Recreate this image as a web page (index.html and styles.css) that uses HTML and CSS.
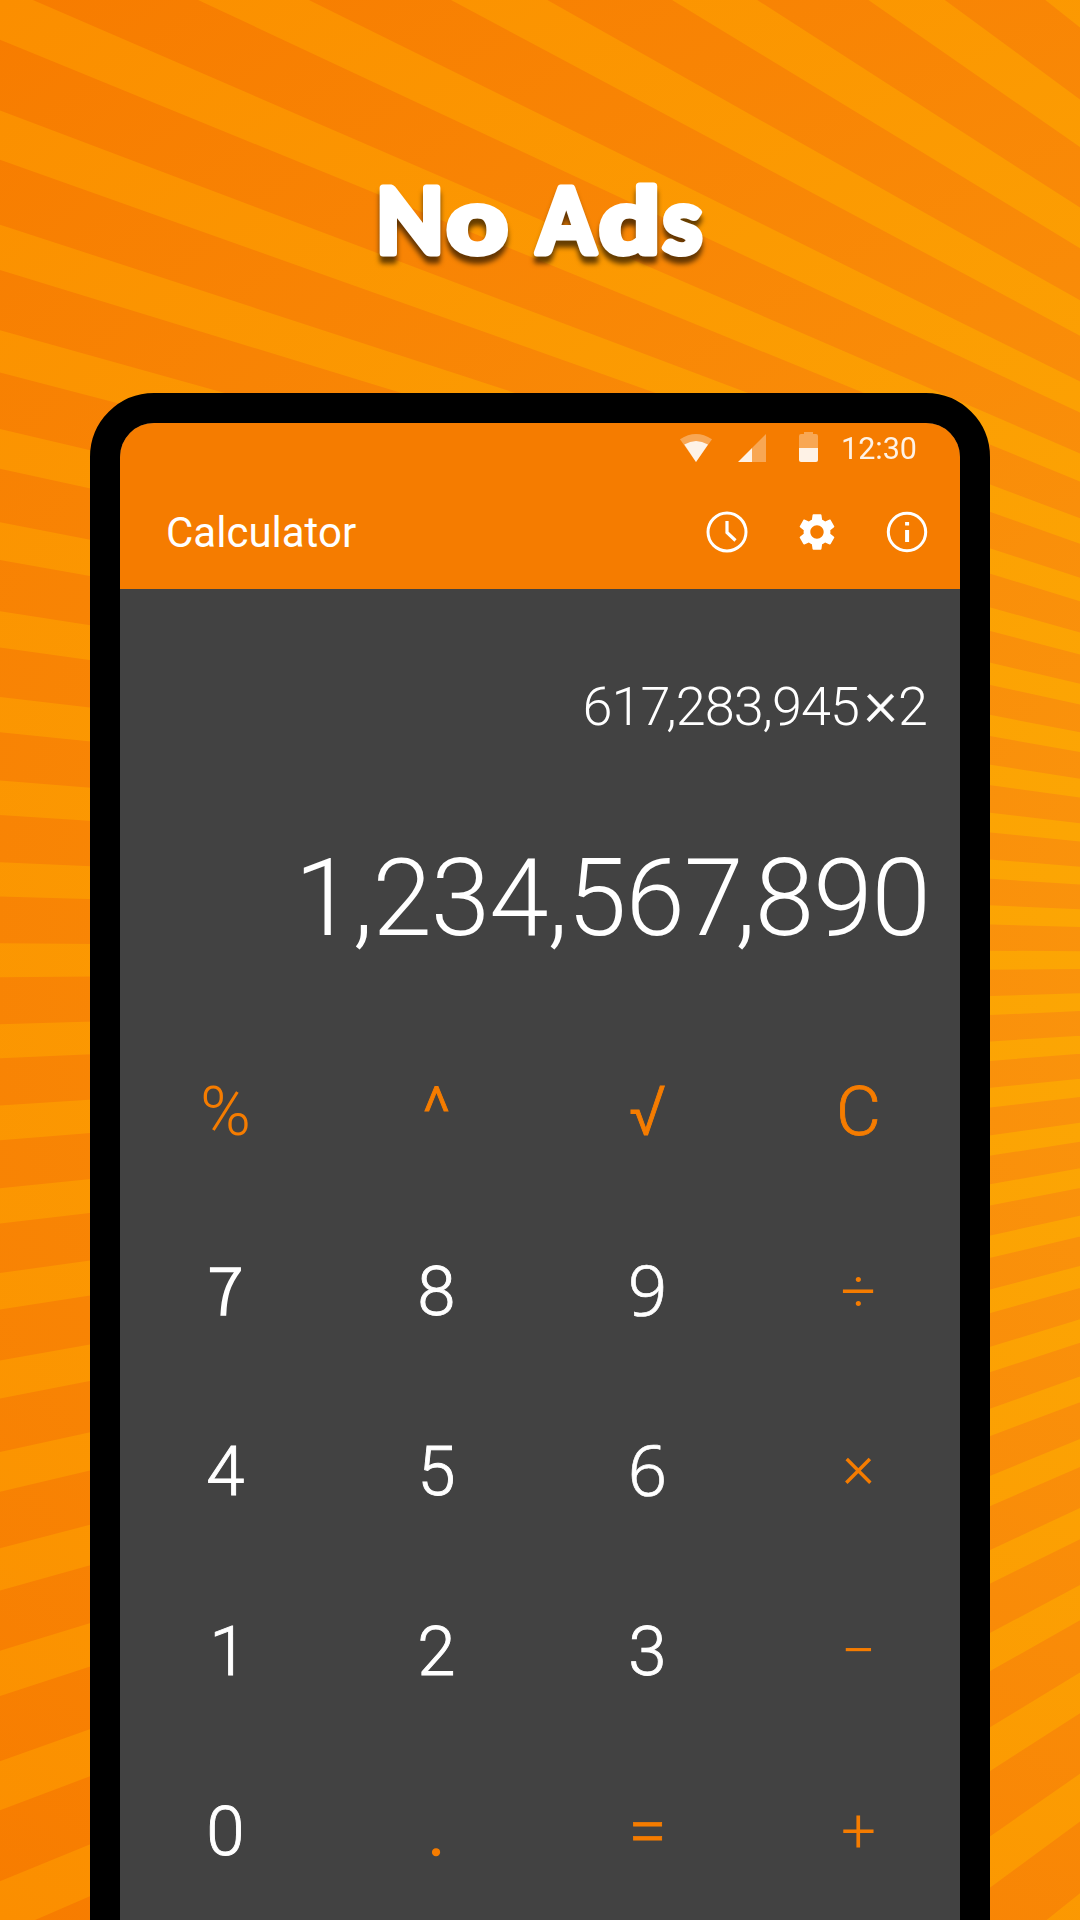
FILE: index.html
```
<!DOCTYPE html>
<html lang="en">
<head>
<meta charset="utf-8">
<title>Calculator</title>
<link rel="stylesheet" href="styles.css">
</head>
<body>
<main class="poster">
  <svg class="rays" viewBox="0 0 1080 1920" aria-hidden="true">
    <defs>
      <radialGradient id="base" gradientUnits="userSpaceOnUse" cx="0" cy="0" r="1564">
        <stop offset=".4" stop-color="#fa930c"/><stop offset="1" stop-color="#f77c00"/>
      </radialGradient>
      <radialGradient id="ray" gradientUnits="userSpaceOnUse" cx="0" cy="0" r="1564">
        <stop offset=".4" stop-color="#fca604"/><stop offset="1" stop-color="#fb8e00"/>
      </radialGradient>
    </defs>
    <g transform="translate(2250 960) scale(1.822 1)">
      <circle r="2500" fill="url(#base)"/>
      <circle r="1500" fill="none" stroke="url(#ray)" stroke-width="2000" pathLength="96" stroke-dasharray=".42 .58" stroke-dashoffset=".21"/>
    </g>
  </svg>
  <h1 class="headline">
    <svg class="headline-art" viewBox="0 0 400 130">
      <text y="92.5"><tspan x="36" textLength="68" lengthAdjust="spacingAndGlyphs">N</tspan><tspan x="107" textLength="60.5" lengthAdjust="spacingAndGlyphs">o</tspan> <tspan x="197.5" textLength="57.5" lengthAdjust="spacingAndGlyphs">A</tspan><tspan x="259.5" textLength="60" lengthAdjust="spacingAndGlyphs">d</tspan><tspan x="323" textLength="39" lengthAdjust="spacingAndGlyphs">s</tspan></text>
    </svg>
  </h1>
  <section class="phone">
    <header class="top">
      <div class="status">
        <svg class="wifi" viewBox="0 0 32 28"><path d="M0 5.3Q16-5.3 32 5.3L16 28Z" opacity=".33"/><path d="M4.3 10.5Q16 3.5 28 10.5L16 28Z" opacity=".86"/></svg>
        <svg class="signal" viewBox="0 0 28 28"><path d="M28 0V28H14V14Z" opacity=".33"/><path d="M0 28L14 14V28Z" opacity=".9"/></svg>
        <svg class="battery" viewBox="0 0 19 30"><path d="M0 16V4Q0 2 2 2H5V0H14V2H17Q19 2 19 4V16Z" opacity=".33"/><path d="M0 16H19V28Q19 30 17 30H2Q0 30 0 28Z" opacity=".9"/></svg>
        <span class="time">12:30</span>
      </div>
      <div class="bar">
        <span class="name">Calculator</span>
        <svg class="icon" viewBox="0 0 42 42"><circle cx="21" cy="21" r="19" fill="none" stroke="#fff" stroke-width="3"/><path d="M21 10V21.5L29.5 29.5" fill="none" stroke="#fff" stroke-width="3.2"/></svg>
        <svg class="icon" viewBox=".7 .7 22.6 22.6"><path fill="#fff" d="M19.14 12.94c.04-.3.06-.61.06-.94 0-.32-.02-.64-.07-.94l2.03-1.58c.18-.14.23-.41.12-.61l-1.92-3.32c-.12-.22-.37-.29-.59-.22l-2.39.96c-.5-.38-1.03-.7-1.62-.94l-.36-2.54c-.04-.24-.24-.41-.48-.41h-3.84c-.24 0-.43.17-.47.41l-.36 2.54c-.59.24-1.13.57-1.62.94l-2.39-.96c-.22-.08-.47 0-.59.22L2.74 8.87c-.12.21-.08.47.12.61l2.03 1.58c-.05.3-.09.63-.09.94s.02.64.07.94l-2.03 1.58c-.18.14-.23.41-.12.61l1.92 3.32c.12.22.37.29.59.22l2.39-.96c.5.38 1.03.7 1.62.94l.36 2.54c.05.24.24.41.48.41h3.84c.24 0 .44-.17.47-.41l.36-2.54c.59-.24 1.13-.56 1.62-.94l2.39.96c.22.08.47 0 .59-.22l1.92-3.32c.12-.22.07-.47-.12-.61l-2.01-1.58zM12 15.6c-1.98 0-3.6-1.62-3.6-3.6s1.62-3.6 3.6-3.6 3.6 1.62 3.6 3.6-1.62 3.6-3.6 3.6z"/></svg>
        <svg class="icon" viewBox="0 0 42 42"><circle cx="21" cy="21" r="18.7" fill="none" stroke="#fff" stroke-width="3"/><path d="M19.1 11h4v3.5h-4zM19.1 19h4v12h-4z" fill="#fff"/></svg>
      </div>
    </header>
    <div class="expression">61<span class="tight">7</span>,283,945<span class="times">×</span>2</div>
    <div class="result">1,234,56<span class="tight">7</span>,890</div>
    <div class="keys">
      <span class="key op">%</span><span class="key op firm">^</span><span class="key op firm">√</span><span class="key op firm">C</span>
      <span class="key curved">7</span><span class="key firm">8</span><span class="key hooked">9</span><span class="key op sign">÷</span>
      <span class="key firm">4</span><span class="key firm">5</span><span class="key hooked">6</span><span class="key op sign cross">×</span>
      <span class="key firm one">1</span><span class="key firm">2</span><span class="key firm">3</span><span class="key op sign">−</span>
      <span class="key firm">0</span><span class="key op dot">.</span><span class="key op equals">=</span><span class="key op sign">+</span>
    </div>
  </section>
</main>
</body>
</html>
```
FILE: styles.css
```
* { box-sizing: border-box; }
body { margin: 0; }
.poster {
  position: relative;
  width: 1080px;
  height: 1920px;
  overflow: hidden;
  padding-top: 160px;
  font-family: Roboto, "Noto Sans", sans-serif;
  color: #fff;
}
.rays { position: absolute; inset: 0; width: 1080px; height: 1920px; z-index: -1; }
.headline { margin: 0 0 103px 340px; width: 400px; height: 130px; }
.headline-art {
  display: block;
  width: 400px;
  height: 130px;
  overflow: visible;
  filter: drop-shadow(0 7px 2.5px rgba(0, 0, 0, .6));
}
.headline-art text {
  font: 700 90px Lato, sans-serif;
  fill: #fff;
  stroke: #fff;
  stroke-width: 7;
  stroke-linejoin: round;
}
.phone {
  width: 900px;
  height: 1600px;
  margin: 0 90px;
  border: 30px solid #000;
  border-radius: 64px;
  background: #424242;
  overflow: hidden;
}
.top { height: 166px; background: #f57c00; }
.status { height: 55px; display: flex; align-items: flex-end; padding: 0 0 0 560px; }
.status svg { fill: #fff; flex: none; margin-bottom: 16px; }
.wifi { width: 32px; height: 28px; }
.signal { width: 28px; height: 28px; margin-left: 26px; }
.battery { width: 19px; height: 30px; margin-left: 33px; }
.time { font-size: 30.5px; line-height: 36px; margin: 0 0 11px 23px; opacity: .9; }
.bar { height: 111px; display: flex; align-items: center; padding: 0 32px 3px 46px; gap: 48px; }
.name { flex: 1; font-size: 42px; }
.icon { width: 42px; height: 42px; }
.expression {
  height: 165px;
  padding: 86px 33px 0 0;
  text-align: right;
  font-size: 54px;
  line-height: 64px;
  font-weight: 300;
  letter-spacing: -.018em;
}
.tight { letter-spacing: -.075em; }
.times { font-size: 64px; line-height: 0; margin: 0 1.5px 0 5px; -webkit-text-stroke: .4px #fff; }
.result {
  height: 227px;
  padding: 82px 30px 0 0;
  text-align: right;
  font-size: 107px;
  line-height: 126px;
  font-weight: 300;
  letter-spacing: -.009em;
}
.keys { display: grid; grid-template-columns: repeat(4, 211px); grid-auto-rows: 180px; padding-top: 41px; }
.key { font-size: 69px; font-weight: 300; line-height: 180px; text-align: center; }
.firm { -webkit-text-stroke: .9px currentColor; }
.one { padding-left: 6px; }
.hooked { font-family: "Noto Sans", sans-serif; line-height: 174px; -webkit-text-stroke: .7px currentColor; }
.curved { font-family: "Noto Sans CJK JP", sans-serif; font-size: 67px; line-height: 168px; -webkit-text-stroke: 1.5px currentColor; }
.op { color: #f57c00; }
.sign { font-size: 62px; line-height: 178px; }
.cross { line-height: 168px; }
.equals { line-height: 178px; -webkit-text-stroke: .8px currentColor; }
.dot { -webkit-text-stroke: 2.5px currentColor; }
```
